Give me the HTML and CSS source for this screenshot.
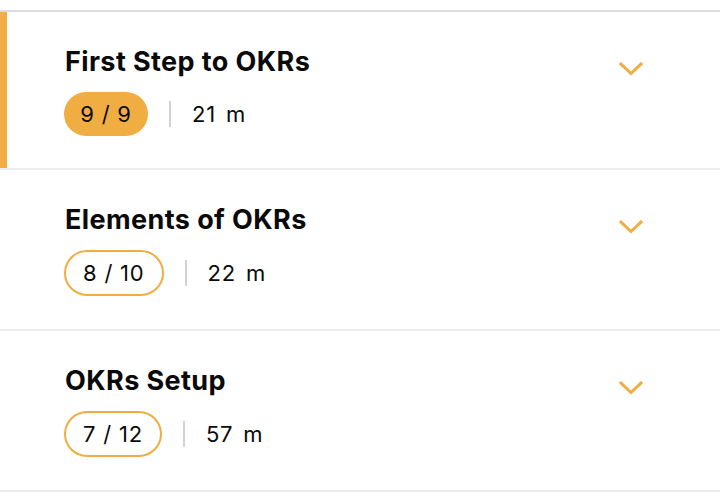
FILE: index.html
```html
<!DOCTYPE html>
<html lang="en">
<head>
<meta charset="utf-8">
<title>OKR Course</title>
<link rel="stylesheet" href="styles.css">
</head>
<body>
<ul class="chapters">
  <li class="chapter chapter--active">
    <div class="chapter__body">
      <h2 class="chapter__title">First Step to OKRs</h2>
      <div class="chapter__meta">
        <span class="pill pill--done">9 / 9</span>
        <span class="divider"></span>
        <span class="duration">21 m</span>
      </div>
    </div>
    <svg class="chevron" width="24" height="14" viewBox="0 0 24 14"><polyline points="2,2 12,11.5 22,2" fill="none" stroke="#F0AD42" stroke-width="3" stroke-linecap="square"/></svg>
  </li>
  <li class="chapter">
    <div class="chapter__body">
      <h2 class="chapter__title">Elements of OKRs</h2>
      <div class="chapter__meta">
        <span class="pill pill--outline">8 / 10</span>
        <span class="divider"></span>
        <span class="duration">22 m</span>
      </div>
    </div>
    <svg class="chevron" width="24" height="14" viewBox="0 0 24 14"><polyline points="2,2 12,11.5 22,2" fill="none" stroke="#F0AD42" stroke-width="3" stroke-linecap="square"/></svg>
  </li>
  <li class="chapter">
    <div class="chapter__body">
      <h2 class="chapter__title">OKRs Setup</h2>
      <div class="chapter__meta">
        <span class="pill pill--outline">7 / 12</span>
        <span class="divider"></span>
        <span class="duration">57 m</span>
      </div>
    </div>
    <svg class="chevron" width="24" height="14" viewBox="0 0 24 14"><polyline points="2,2 12,11.5 22,2" fill="none" stroke="#F0AD42" stroke-width="3" stroke-linecap="square"/></svg>
  </li>
</ul>
</body>
</html>
```

FILE: styles.css
```css
html, body {
  margin: 0;
  padding: 0;
  background: #ffffff;
}

body {
  font-family: "Inter", "Roboto", "Liberation Sans", sans-serif;
  color: #0a0a0a;
}

.chapters {
  list-style: none;
  margin: 10px 0 0 0;
  padding: 0;
  border-top: 2px solid #dcdcdc;
}

.chapter {
  display: flex;
  align-items: flex-start;
  justify-content: space-between;
  padding: 34px 77px 33px 64px;
  border-bottom: 2px solid #ececec;
}

.chapter--active {
  box-shadow: inset 7px 0 0 #F2AE42;
  padding-bottom: 32px;
}

.chapter__body {
  display: flex;
  flex-direction: column;
  gap: 14px;
}

.chapter__title {
  margin: 0 0 0 1px;
  font-size: 27px;
  line-height: 32px;
  font-weight: 700;
  letter-spacing: 0.4px;
}

.chapter__meta {
  display: flex;
  align-items: center;
  gap: 21px;
}

.pill {
  display: inline-flex;
  align-items: center;
  justify-content: center;
  box-sizing: border-box;
  border-radius: 999px;
  font-size: 22px;
  font-weight: 400;
  letter-spacing: 0.8px;
}

.pill--done {
  height: 44px;
  width: 84px;
  background: #F0AD42;
}

.pill--outline {
  height: 46px;
  padding: 0 17px;
  border: 2px solid #F0AD42;
}

.divider {
  width: 2px;
  height: 26px;
  background: #d2d2d2;
}

.duration {
  font-size: 22px;
  letter-spacing: 0.8px;
  word-spacing: 3px;
}

.chevron {
  margin-top: 16px;
  flex: none;
}
```
